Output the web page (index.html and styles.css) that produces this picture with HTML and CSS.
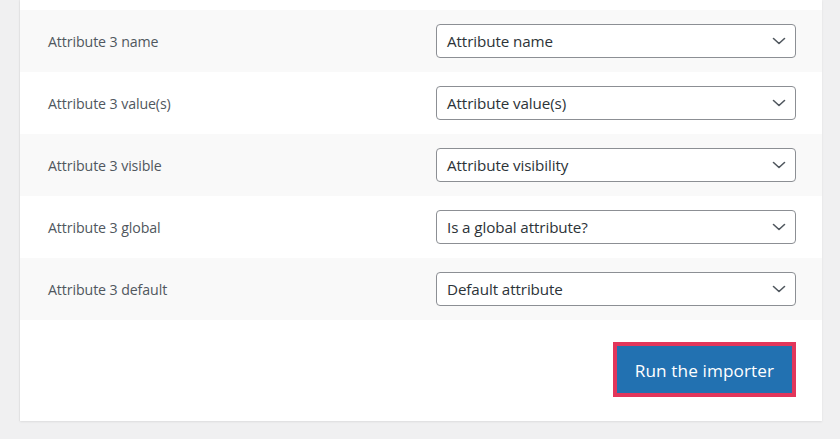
FILE: index.html
```html
<!DOCTYPE html>
<html>
<head>
<meta charset="utf-8">
<link rel="stylesheet" href="styles.css">
</head>
<body>
<div class="page">
  <div class="card">
    <div class="rows">
      <div class="row alt">
        <div class="label">Attribute 3 name</div>
        <div class="select"><span>Attribute name</span><svg class="chev" width="14" height="8" viewBox="0 0 14 8"><path d="M1.5 1.5 L7 6.5 L12.5 1.5" fill="none" stroke="#50575e" stroke-width="1.6" stroke-linecap="round" stroke-linejoin="round"/></svg></div>
      </div>
      <div class="row">
        <div class="label">Attribute 3 value(s)</div>
        <div class="select"><span>Attribute value(s)</span><svg class="chev" width="14" height="8" viewBox="0 0 14 8"><path d="M1.5 1.5 L7 6.5 L12.5 1.5" fill="none" stroke="#50575e" stroke-width="1.6" stroke-linecap="round" stroke-linejoin="round"/></svg></div>
      </div>
      <div class="row alt">
        <div class="label">Attribute 3 visible</div>
        <div class="select"><span>Attribute visibility</span><svg class="chev" width="14" height="8" viewBox="0 0 14 8"><path d="M1.5 1.5 L7 6.5 L12.5 1.5" fill="none" stroke="#50575e" stroke-width="1.6" stroke-linecap="round" stroke-linejoin="round"/></svg></div>
      </div>
      <div class="row">
        <div class="label">Attribute 3 global</div>
        <div class="select"><span>Is a global attribute?</span><svg class="chev" width="14" height="8" viewBox="0 0 14 8"><path d="M1.5 1.5 L7 6.5 L12.5 1.5" fill="none" stroke="#50575e" stroke-width="1.6" stroke-linecap="round" stroke-linejoin="round"/></svg></div>
      </div>
      <div class="row alt">
        <div class="label">Attribute 3 default</div>
        <div class="select"><span>Default attribute</span><svg class="chev" width="14" height="8" viewBox="0 0 14 8"><path d="M1.5 1.5 L7 6.5 L12.5 1.5" fill="none" stroke="#50575e" stroke-width="1.6" stroke-linecap="round" stroke-linejoin="round"/></svg></div>
      </div>
    </div>
    <div class="footer">
      <div class="btn-outline"><button class="btn">Run the importer</button></div>
    </div>
  </div>
</div>
</body>
</html>
```
FILE: styles.css
```css
* { box-sizing: border-box; }
html, body { margin: 0; padding: 0; }
body {
  background: #f0f0f1;
  font-family: "Open Sans", "Noto Sans", sans-serif;
  width: 840px;
  height: 439px;
  overflow: hidden;
}
.page {
  padding: 0 18px 0 20px;
}
.card {
  background: #fff;
  padding-top: 10px;
  box-shadow: 0 1px 2px rgba(0,0,0,0.08), -1px 0 1px rgba(0,0,0,0.03);
}
.rows { display: flex; flex-direction: column; }
.row {
  display: grid;
  grid-template-columns: 388px 360px;
  align-items: center;
  height: 62px;
  padding: 0 26px 0 28px;
}
.row.alt { background: #f9f9f9; }
.label {
  font-size: 14.2px;
  color: #50575e;
  letter-spacing: -0.1px;
  padding-top: 1px;
}
.select {
  height: 34px;
  border: 1px solid #8c8f94;
  border-radius: 4px;
  background: #fff;
  display: flex;
  align-items: center;
  justify-content: space-between;
  padding: 0 9px 0 10px;
  font-size: 15.2px;
  color: #2c3338;
  margin-bottom: 1px;
}
.select span { letter-spacing: -0.1px; }
.chev { display: block; }
.footer {
  height: 101px;
  display: flex;
  justify-content: flex-end;
  align-items: flex-start;
  padding: 22px 26px 0 0;
}
.btn-outline {
  border: 4px solid #e2365b;
  width: 183px;
  height: 55px;
  padding: 0;
}
.btn {
  width: 100%;
  height: 100%;
  border: none;
  background: #2271b1;
  color: #fff;
  font-family: "Open Sans", "Noto Sans", sans-serif;
  font-size: 17.2px;
  letter-spacing: 0.1px;
  padding: 2px 0 0 0;
  margin: 0;
  cursor: pointer;
}
```
